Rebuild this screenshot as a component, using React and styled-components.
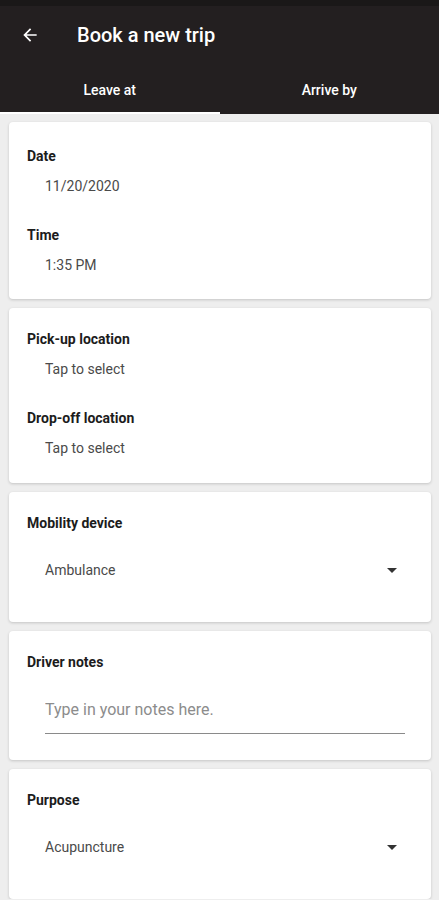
import React from "react";
import styled, { createGlobalStyle } from "styled-components";

const Global = createGlobalStyle`
  body {
    margin: 0;
    background: #eeeeee;
    font-family: Roboto, "Liberation Sans", sans-serif;
  }
`;

const Header = styled.header`
  background-color: #231f20;
  color: white;
`;
const StatusBar = styled.div`
  height: 6px;
  background-color: #1a1818;
`;
const TitleRow = styled.div`
  display: flex;
  align-items: center;
  height: 58px;
  padding-left: 20px;
  h1 {
    margin: 0 0 0 37px;
    font-size: 20px;
    font-weight: 500;
  }
`;
const Tabs = styled.div`
  display: flex;
  margin-top: 4px;
`;
const Tab = styled.div`
  flex: 1;
  display: flex;
  align-items: center;
  justify-content: center;
  height: 46px;
  font-size: 14px;
  font-weight: 500;
  box-sizing: border-box;
  border-bottom: 2px solid ${(p) => (p.active ? "#ffffff" : "transparent")};
`;

const List = styled.main`
  display: flex;
  flex-direction: column;
  gap: 9px;
  padding: 8px 8px 0 9px;
`;
const Card = styled.section`
  background: white;
  border-radius: 4px;
  box-shadow: 0 1px 3px rgba(0, 0, 0, 0.18);
  padding: ${(p) => p.pad || "24px 18px 24px"};
`;
const Label = styled.div`
  font-size: 14px;
  font-weight: 700;
  color: #1c1c1c;
  line-height: 20px;
`;
const Value = styled.div`
  font-size: 14px;
  color: #4a4a4a;
  line-height: 20px;
  padding-left: 18px;
  margin-top: 10px;
  margin-bottom: ${(p) => (p.last ? 0 : "29px")};
`;
const Select = styled.div`
  display: flex;
  align-items: center;
  justify-content: space-between;
  height: 48px;
  margin-top: 13px;
  padding: 0 16px 0 18px;
  font-size: 14px;
  color: #4a4a4a;
`;
const NotesInput = styled.input`
  display: block;
  box-sizing: border-box;
  width: calc(100% - 18px);
  margin: 20px 0 0 18px;
  padding: 8px 0 14px;
  border: none;
  border-bottom: 1px solid #8a8a8a;
  font-family: inherit;
  font-size: 16px;
  line-height: 19px;
  color: #333;
  outline: none;
  &::placeholder {
    color: #8c8c8c;
  }
`;

const BackArrow = () => (
  <svg width="20" height="20" viewBox="0 0 24 24">
    <path
      fill="white"
      d="M20 11H7.83l5.59-5.59L12 4l-8 8 8 8 1.41-1.41L7.83 13H20v-2z"
    />
  </svg>
);

const Caret = () => (
  <svg width="10" height="5" viewBox="0 0 10 5">
    <path fill="#333" d="M0 0h10L5 5z" />
  </svg>
);

const App = () => {
  return (
    <>
      <Global />
      <Header>
        <StatusBar />
        <TitleRow>
          <BackArrow />
          <h1>Book a new trip</h1>
        </TitleRow>
        <Tabs>
          <Tab active>Leave at</Tab>
          <Tab>Arrive by</Tab>
        </Tabs>
      </Header>
      <List>
        <Card>
          <Label>Date</Label>
          <Value>11/20/2020</Value>
          <Label>Time</Label>
          <Value last>1:35 PM</Value>
        </Card>
        <Card pad="21px 18px 25px">
          <Label>Pick-up location</Label>
          <Value>Tap to select</Value>
          <Label>Drop-off location</Label>
          <Value last>Tap to select</Value>
        </Card>
        <Card pad="21px 18px 28px">
          <Label>Mobility device</Label>
          <Select>
            Ambulance
            <Caret />
          </Select>
        </Card>
        <Card pad="21px 26px 26px 18px">
          <Label>Driver notes</Label>
          <NotesInput placeholder="Type in your notes here." />
        </Card>
        <Card pad="21px 18px 28px">
          <Label>Purpose</Label>
          <Select>
            Acupuncture
            <Caret />
          </Select>
        </Card>
      </List>
    </>
  );
};

export default App;
